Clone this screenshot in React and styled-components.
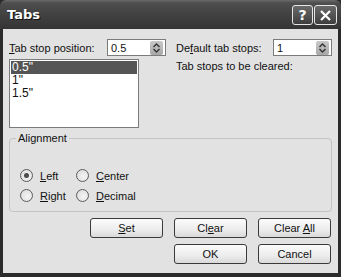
import React from "react";
import styled, { createGlobalStyle } from "styled-components";

const Global = createGlobalStyle`
  html, body { margin: 0; padding: 0; background: #2a2a2a; }
  body { font-family: "Liberation Sans", Arial, sans-serif; font-size: 11px; color: #111; }
  * { box-sizing: border-box; }
`;

const Window = styled.div`
  width: 341px;
  height: 277px;
  background: #2b2b2b;
  display: flex;
  flex-direction: column;
  padding: 0 3px 4px 3px;
`;

const TitleBar = styled.div`
  height: 29px;
  margin: 0 -3px;
  padding: 5px 4px 0 7px;
  display: flex;
  align-items: flex-start;
  background: linear-gradient(#6a6a6a 0px, #4e4e4e 3px, #424242 14px, #353535 28px);
  border-top-left-radius: 6px;
  border-top-right-radius: 6px;
`;

const Title = styled.div`
  flex: 1;
  color: #fff;
  font-family: "DejaVu Sans", sans-serif;
  font-weight: bold;
  font-size: 13px;
  line-height: 20px;
  text-shadow: 1px 1px 0 #111;
`;

const TitleButton = styled.div`
  width: ${(p) => p.$w}px;
  height: 20px;
  margin-left: 1px;
  border: 1px solid #e6e6e6;
  border-radius: 3px;
  background: linear-gradient(#6a6a6a, #3e3e3e);
  display: flex;
  align-items: center;
  justify-content: center;
  color: #fff;
`;

const Glyph = styled.span`
  font-family: "DejaVu Sans", sans-serif;
  font-weight: bold;
  font-size: 14px;
`;

const Body = styled.div`
  flex: 1;
  background: #e2e2e2;
  padding: 10px 6px 0 6px;
  display: flex;
  flex-direction: column;
`;

const Top = styled.div`
  display: grid;
  grid-template-columns: 157px 1fr;
  column-gap: 10px;
`;

const Col = styled.div`
  display: flex;
  flex-direction: column;
`;

const FieldRow = styled.div`
  display: flex;
  align-items: center;
  justify-content: space-between;
  height: 17px;
`;

const Label = styled.span`
  white-space: nowrap;
  u { text-decoration: underline; text-underline-offset: 1px; }
`;

const Spin = styled.div`
  width: 59px;
  height: 17px;
  border: 1px solid #7b7b7b;
  background: #fff;
  display: flex;
  align-items: center;
  padding: 0 2px 0 3px;
`;

const SpinValue = styled.div`
  flex: 1;
  font-size: 11px;
`;

const SpinBtn = styled.div`
  width: 13px;
  height: 14px;
  border-radius: 2px;
  background: linear-gradient(#c8c8c8, #a8a8a8);
  display: flex;
  align-items: center;
  justify-content: center;
`;

const List = styled.div`
  margin-top: 3px;
  width: 130px;
  height: 69px;
  border: 1px solid #7b7b7b;
  background: #fff;
  padding: 1px;
`;

const Item = styled.div`
  height: 13px;
  line-height: 13px;
  font-size: 12px;
  padding-left: 1px;
  background: ${(p) => (p.$sel ? "#555" : "transparent")};
  color: ${(p) => (p.$sel ? "#fff" : "#111")};
`;

const ClearedLabel = styled.div`
  margin-top: 4px;
  line-height: 13px;
`;

const Group = styled.fieldset`
  margin: 4px 0 0 0;
  border: 1px solid #c4c4c4;
  border-radius: 4px;
  padding: 24px 0 9px 10px;
  display: grid;
  grid-template-columns: 56px auto;
  row-gap: 7px;
  justify-content: start;
  min-width: 0;
`;

const Legend = styled.legend`
  margin-left: -4px;
  padding: 0 2px;
  line-height: 13px;
`;

const Radio = styled.label`
  display: flex;
  align-items: center;
  gap: 7px;
  height: 13px;
  u { text-decoration: underline; text-underline-offset: 1px; }
`;

const Circle = styled.span`
  width: 13px;
  height: 13px;
  border-radius: 50%;
  border: 1px solid #5c5c5c;
  background: radial-gradient(circle at 60% 60%, #f4f4f4, #d8d8d8);
  display: flex;
  align-items: center;
  justify-content: center;
  &::after {
    content: "";
    width: 5px;
    height: 5px;
    border-radius: 50%;
    background: ${(p) => (p.$on ? "#4a4a4a" : "transparent")};
  }
`;

const Buttons = styled.div`
  margin-top: 6px;
  align-self: flex-end;
  margin-right: 1px;
  display: grid;
  grid-template-columns: repeat(3, 73px);
  column-gap: 11px;
  row-gap: 6px;
`;

const Button = styled.div`
  grid-column: ${(p) => p.$col};
  height: 20px;
  border: 1px solid #3a3a3a;
  border-radius: 3px;
  background: linear-gradient(#fbfbfb, #ececec 60%, #d9d9d9);
  display: flex;
  align-items: center;
  justify-content: center;
  u { text-decoration: underline; text-underline-offset: 1px; }
`;

const Arrows = () => (
  <svg width="9" height="12" viewBox="0 0 9 12">
    <path d="M1.5 5 L4.5 2 L7.5 5" fill="none" stroke="#333" strokeWidth="1.4" />
    <path d="M1.5 7 L4.5 10 L7.5 7" fill="none" stroke="#333" strokeWidth="1.4" />
  </svg>
);

export default function App() {
  return (
    <>
      <Global />
      <Window>
        <TitleBar>
          <Title>Tabs</Title>
          <TitleButton $w={21}>
            <Glyph>?</Glyph>
          </TitleButton>
          <TitleButton $w={23}>
            <svg width="13" height="13" viewBox="0 0 13 13">
              <path d="M2 2 L11 11 M11 2 L2 11" stroke="#fff" strokeWidth="2.2" />
            </svg>
          </TitleButton>
        </TitleBar>
        <Body>
          <Top>
            <Col>
              <FieldRow>
                <Label><u>T</u>ab stop position:</Label>
                <Spin>
                  <SpinValue>0.5</SpinValue>
                  <SpinBtn><Arrows /></SpinBtn>
                </Spin>
              </FieldRow>
              <List>
                <Item $sel>0.5"</Item>
                <Item>1"</Item>
                <Item>1.5"</Item>
              </List>
            </Col>
            <Col>
              <FieldRow>
                <Label>De<u>f</u>ault tab stops:</Label>
                <Spin>
                  <SpinValue>1</SpinValue>
                  <SpinBtn><Arrows /></SpinBtn>
                </Spin>
              </FieldRow>
              <ClearedLabel>Tab stops to be cleared:</ClearedLabel>
            </Col>
          </Top>
          <Group>
            <Legend>Alignment</Legend>
            <Radio><Circle $on /><span><u>L</u>eft</span></Radio>
            <Radio><Circle /><span><u>C</u>enter</span></Radio>
            <Radio><Circle /><span><u>R</u>ight</span></Radio>
            <Radio><Circle /><span><u>D</u>ecimal</span></Radio>
          </Group>
          <Buttons>
            <Button $col={1}><span><u>S</u>et</span></Button>
            <Button $col={2}><span>Cl<u>e</u>ar</span></Button>
            <Button $col={3}><span>Clear <u>A</u>ll</span></Button>
            <Button $col={2}>OK</Button>
            <Button $col={3}>Cancel</Button>
          </Buttons>
        </Body>
      </Window>
    </>
  );
}
